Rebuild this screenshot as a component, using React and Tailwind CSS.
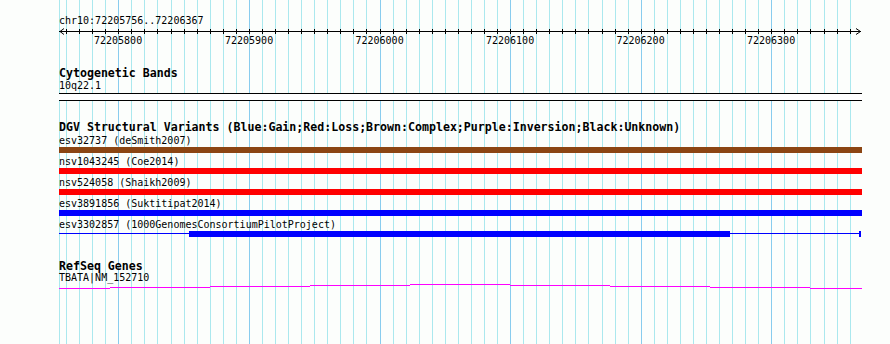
import React from 'react';

const LEFT = 59;
const TRACK_W = 803;
const STEP = 13.06;

// grid lines every 10bp, darker every 100bp
const gridLines = [{ x: 59, dark: false }];
for (let k = -4; k <= 56; k++) {
  gridLines.push({ x: Math.round(118.3 + STEP * k), dark: k % 10 === 0 });
}

const labels = [
  { text: '72205800', x: 118 },
  { text: '72205900', x: 249 },
  { text: '72206000', x: 379.5 },
  { text: '72206100', x: 510 },
  { text: '72206200', x: 640.5 },
  { text: '72206300', x: 771 },
];

const variants = [
  { id: 'esv32737 (deSmith2007)', color: 'bg-[#8b4513]' },
  { id: 'nsv1043245 (Coe2014)', color: 'bg-[#ff0000]' },
  { id: 'nsv524058 (Shaikh2009)', color: 'bg-[#ff0000]' },
  { id: 'esv3891856 (Suktitipat2014)', color: 'bg-[#0000ff]' },
];

// transcript drawn as stepped segments
const geneSegs = [
  [59, 110, 5], [110, 210, 4], [210, 310, 3], [310, 410, 2], [410, 510, 1],
  [510, 610, 2], [610, 710, 3], [710, 810, 4], [810, 862, 5],
];

const Title = ({ children }) => (
  <div className="text-[11.6px] leading-[11px] h-[11px] font-bold whitespace-nowrap">{children}</div>
);

const Label = ({ children }) => (
  <div className="text-[10px] leading-[10px] h-[10px] whitespace-nowrap">{children}</div>
);

const Ruler = () => (
  <svg width={TRACK_W} height="8" className="block" shapeRendering="crispEdges">
    <line x1="0" y1="4.5" x2="802" y2="4.5" stroke="#000" strokeWidth="1" />
    {gridLines.slice(1).map((g) => (
      <line key={g.x} x1={g.x - LEFT + 0.5} y1="2" x2={g.x - LEFT + 0.5} y2="7" stroke="#000" strokeWidth="1" />
    ))}
    <polyline points="5,1.5 1,4.5 5,7.5" fill="none" stroke="#000" strokeWidth="1" shapeRendering="auto" />
    <polyline points="797,1.5 801.5,4.5 797,7.5" fill="none" stroke="#000" strokeWidth="1" shapeRendering="auto" />
  </svg>
);

const PartialVariant = () => (
  <svg width={TRACK_W} height="6" className="block" shapeRendering="crispEdges">
    <rect x="0" y="2" width="801" height="1" fill="#0000ff" />
    <rect x="130" y="0" width="541" height="6" fill="#0000ff" />
    <rect x="800" y="0" width="2" height="6" fill="#0000ff" />
  </svg>
);

export default function App() {
  return (
    <div className="relative w-[890px] h-[344px] overflow-hidden bg-[#fcfefc] text-black font-['DejaVu_Sans_Mono',monospace]">
      {/* grid */}
      {gridLines.map((g) => (
        <div
          key={g.x}
          className={`absolute top-0 bottom-0 w-px ${g.dark ? 'bg-[#88ccee]' : 'bg-[#aae8ee]'}`}
          style={{ left: g.x }}
        />
      ))}

      <div className="relative flex flex-col w-[862px] pl-[59px] pt-[16px]">
        {/* ruler */}
        <div className="flex flex-col gap-[1px]">
          <Label>chr10:72205756..72206367</Label>
          <Ruler />
          <div className="relative h-[10px] text-[10px] leading-[10px]">
            {labels.map((l) => (
              <span key={l.text} className="absolute top-0 w-[48px] text-center" style={{ left: l.x - LEFT - 24 }}>
                {l.text}
              </span>
            ))}
          </div>
        </div>

        {/* Cytogenetic bands */}
        <div className="flex flex-col gap-[2px] mt-[22px]">
          <Title>Cytogenetic Bands</Title>
          <Label>10q22.1</Label>
          <div className="h-[8px] border-y border-black bg-white" />
        </div>

        {/* DGV */}
        <div className="flex flex-col gap-[3px] mt-[21px]">
          <Title>DGV Structural Variants (Blue:Gain;Red:Loss;Brown:Complex;Purple:Inversion;Black:Unknown)</Title>
          <div className="flex flex-col gap-[4px]">
            {variants.map((v) => (
              <div key={v.id} className="flex flex-col gap-[1px]">
                <Label>{v.id}</Label>
                <div className={`h-[6px] ${v.color}`} />
              </div>
            ))}
            <div className="flex flex-col gap-[1px]">
              <Label>esv3302857 (1000GenomesConsortiumPilotProject)</Label>
              <PartialVariant />
            </div>
          </div>
        </div>

        {/* RefSeq */}
        <div className="flex flex-col gap-[1px] mt-[24px]">
          <Title>RefSeq Genes</Title>
          <Label>TBATA|NM_152710</Label>
          <svg width={TRACK_W} height="6" className="block -mt-px" shapeRendering="crispEdges">
            {geneSegs.map(([a, b, y]) => (
              <rect key={a} x={a - LEFT} y={y} width={b - a} height="1" fill="#ff00ff" />
            ))}
          </svg>
        </div>
      </div>
    </div>
  );
}
